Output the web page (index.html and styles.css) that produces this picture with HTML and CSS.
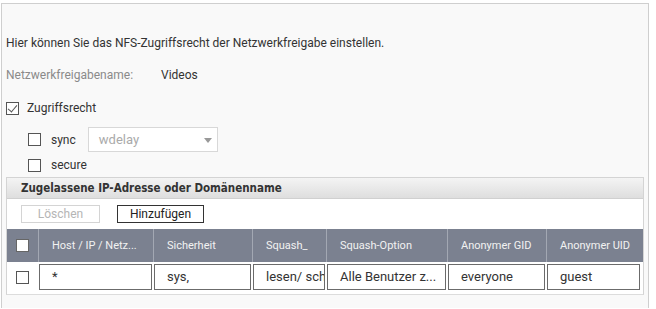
FILE: index.html
```html
<!DOCTYPE html>
<html lang="de">
<head>
  <meta charset="UTF-8">
  <title>NFS-Zugriffsrecht</title>
  <link rel="stylesheet" href="styles.css">
</head>
<body>
  <div class="window">
    <p class="intro">Hier können Sie das NFS-Zugriffsrecht der Netzwerkfreigabe einstellen.</p>

    <div class="name-row">
      <span class="label">Netzwerkfreigabename:</span>
      <span class="value">Videos</span>
    </div>

    <label class="check-row access">
      <span class="box checked"></span> Zugriffsrecht
    </label>

    <div class="check-row sync">
      <span class="box"></span>
      <span class="opt">sync</span>
      <div class="select">wdelay<span class="arrow"></span></div>
    </div>

    <label class="check-row secure">
      <span class="box"></span>
      <span class="opt">secure</span>
    </label>

    <div class="panel">
      <div class="panel-head">Zugelassene IP-Adresse oder Domänenname</div>
      <div class="toolbar">
        <button class="btn disabled">Löschen</button>
        <button class="btn">Hinzufügen</button>
      </div>
      <div class="grid head">
        <div class="cell chk"><span class="box white"></span></div>
        <div class="cell">Host / IP / Netz...</div>
        <div class="cell">Sicherheit</div>
        <div class="cell">Squash_</div>
        <div class="cell">Squash-Option</div>
        <div class="cell">Anonymer GID</div>
        <div class="cell">Anonymer UID</div>
      </div>
      <div class="grid row">
        <div class="cell chk"><span class="box"></span></div>
        <div class="cell"><div class="field">*</div></div>
        <div class="cell"><div class="field">sys,</div></div>
        <div class="cell"><div class="field">lesen/ schr</div></div>
        <div class="cell"><div class="field">Alle Benutzer z...</div></div>
        <div class="cell"><div class="field">everyone</div></div>
        <div class="cell"><div class="field">guest</div></div>
      </div>
    </div>
  </div>
</body>
</html>
```

FILE: styles.css
```css
body {
  margin: 0;
  background: #ffffff;
  font-family: Roboto, "Liberation Sans", sans-serif;
  font-size: 12px;
  color: #333;
}

.window {
  margin: 3px 0 0 1px;
  width: 648px;
  height: 305px;
  border: 1px solid #cfcfcf;
  border-bottom: none;
  background: #f9f9f9;
  padding: 0 0 0 4px;
  box-sizing: border-box;
  overflow: hidden;
}

.intro {
  margin: 32px 0 0;
  line-height: 14px;
  color: #333;
}

.name-row {
  margin-top: 18px;
  line-height: 14px;
  display: flex;
}

.name-row .label {
  color: #8a8a8a;
  width: 155px;
}

.check-row {
  display: flex;
  align-items: center;
}

.access {
  margin-top: 19px;
  height: 14px;
  gap: 8px;
}

.box {
  display: inline-block;
  width: 11px;
  height: 11px;
  border: 1px solid #555;
  background: #fff;
  position: relative;
}

.box.checked::after {
  content: '';
  position: absolute;
  left: 3px;
  top: 0px;
  width: 4px;
  height: 8px;
  border: solid #555;
  border-width: 0 1.2px 1.2px 0;
  transform: rotate(40deg);
}

.sync {
  margin-top: 12px;
  height: 25px;
  padding-left: 22px;
}

.opt {
  margin-left: 10px;
}

.select {
  margin-left: 12px;
  width: 130px;
  height: 25px;
  box-sizing: border-box;
  border: 1px solid #d8d8d8;
  background: #fff;
  color: #aaa;
  font-size: 13px;
  padding-left: 10px;
  line-height: 23px;
  position: relative;
}

.arrow {
  position: absolute;
  right: 5px;
  top: 10px;
  border-left: 4px solid transparent;
  border-right: 4px solid transparent;
  border-top: 5px solid #999;
}

.secure {
  margin-top: 6px;
  height: 14px;
  padding-left: 22px;
}

.panel {
  margin-top: 5px;
  width: 638px;
  height: 118px;
  border: 1px solid #d4d4d4;
  border-bottom: 1px solid #dcdcdc;
  box-sizing: border-box;
  background: #fff;
}

.panel-head {
  height: 20px;
  line-height: 20px;
  padding-left: 14px;
  background: linear-gradient(#f4f4f4, #dedede);
  border-bottom: 1px solid #d0d0d0;
  font-family: "DejaVu Sans", Verdana, sans-serif;
  font-stretch: condensed;
  font-weight: bold;
  font-size: 11.5px;
  color: #333;
}

.toolbar {
  height: 30px;
  display: flex;
  align-items: center;
  gap: 17px;
  padding-left: 14px;
}

.btn {
  height: 18px;
  padding: 0;
  font-family: Roboto, "Liberation Sans", sans-serif;
  font-size: 12px;
  background: #fff;
  border: 1px solid #333;
  color: #222;
  width: 87px;
}

.btn.disabled {
  width: 79px;
  border-color: #d4d4d4;
  color: #b5b5b5;
}

.grid {
  display: grid;
  grid-template-columns: 31px 115px 99px 74px 121px 99px 95px;
}

.head {
  height: 33px;
  background: #7b8190;
  color: #f2f2f2;
  font-size: 11px;
}

.head .cell {
  border-left: 1px solid #a3a8b3;
  padding-left: 13px;
  line-height: 33px;
  white-space: nowrap;
  overflow: hidden;
}

.head .cell.chk {
  border-left: none;
}

.cell.chk {
  padding: 0;
  display: flex;
  align-items: center;
  justify-content: center;
}

.head .box {
  border-color: #666;
}

.row {
  height: 30px;
  align-items: center;
}

.row .cell {
  padding: 0 1px;
  min-width: 0;
}

.field {
  height: 26px;
  box-sizing: border-box;
  border: 1px solid #6b6b6b;
  background: #fff;
  font-size: 13px;
  line-height: 24px;
  padding-left: 12px;
  white-space: nowrap;
  overflow: hidden;
  text-overflow: clip;
  color: #333;
}
```
